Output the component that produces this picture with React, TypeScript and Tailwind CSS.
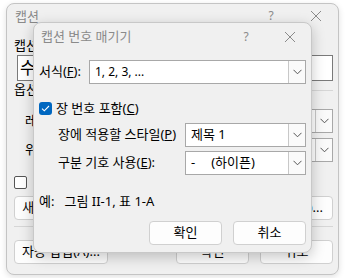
import React from 'react';

const font = { fontFamily: '"Noto Sans", "Noto Sans CJK KR", sans-serif' };

function Chevron() {
  return (
    <svg width="9" height="6" viewBox="0 0 9 6">
      <path d="M0.5 0.8 L4.5 4.8 L8.5 0.8" fill="none" stroke="#555" strokeWidth="1" />
    </svg>
  );
}

function Select({ value, className }: { value: React.ReactNode; className: string }) {
  return (
    <div className={`flex items-stretch border border-[#a8a8a8] bg-white ${className}`}>
      <div className="flex flex-1 items-center pl-[5px] text-[12px] text-black">{value}</div>
      <div className="flex w-[17px] items-center justify-center border-l border-[#c8c8c8] bg-[#fafafa]">
        <Chevron />
      </div>
    </div>
  );
}

function Btn({ children, className }: { children: React.ReactNode; className: string }) {
  return (
    <div className={`flex h-[24px] items-center rounded-[4px] border border-[#d0d0d0] bg-[#fdfdfd] text-[13px] text-black ${className}`}>
      {children}
    </div>
  );
}

function CloseX() {
  return (
    <svg width="12" height="12" viewBox="0 0 12 12">
      <path d="M1 1 L11 11 M11 1 L1 11" stroke="#8a8a8a" strokeWidth="1" />
    </svg>
  );
}

export default function App() {
  return (
    <div className="relative h-[278px] w-[347px] overflow-hidden bg-white" style={font}>
      {/* outer caption dialog */}
      <div className="ml-[6px] mt-[3px] flex h-[272px] w-[333px] flex-col rounded-[8px] border border-[#c4c4c4] bg-[#f0f0f0] shadow-[0_2px_6px_rgba(0,0,0,0.12)]">
        <div className="flex h-[23px] items-center pl-[8px] text-[13px] text-[#8a8a8a]">
          <span className="flex-1 pt-[2px]">캡션</span>
          <span className="w-[14px] text-center text-[12px]">?</span>
          <span className="ml-[32px] mr-[16px]"><CloseX /></span>
        </div>
        <div className="flex flex-col pl-[7px] pr-[5px]">
          <div className="mt-[10px] h-[16px] text-[13px] leading-[16px] text-black">캡션(C):</div>
          <div className="ml-[3px] mt-[2px] flex h-[26px] items-center border border-[#7a7a7a] bg-white pl-[2px] text-[17px] text-black">수식 1</div>
          <div className="mt-[1px] flex h-[16px] items-center text-[13px] text-black">
            <span>옵션</span>
            <div className="ml-[6px] h-px flex-1 bg-[#d6d6d6]" />
          </div>
          <div className="mt-[11px] flex h-[24px] items-center">
            <span className="ml-[11px] w-[70px] text-[13px] text-black">레이블(L):</span>
            <Select value="수식" className="h-[24px] flex-1" />
          </div>
          <div className="mt-[5px] flex h-[24px] items-center">
            <span className="ml-[11px] w-[70px] text-[13px] text-black">위치(P):</span>
            <Select value="선택한 항목 아래" className="h-[24px] flex-1" />
          </div>
          <div className="mt-[14px] flex h-[13px] items-center">
            <div className="h-[13px] w-[13px] rounded-[2px] border border-[#555] bg-white" />
            <span className="ml-[6px] text-[13px] text-black">캡션에서 레이블 제외(E)</span>
          </div>
          <div className="mt-[7px] flex h-[24px] gap-[8px]">
            <Btn className="w-[96px] justify-center">새 레이블(N)...</Btn>
            <Btn className="flex-1 justify-center">레이블 삭제(D)</Btn>
            <Btn className="w-[112px] justify-end border-[#0067c0] pr-[9px]">번호 매기기(U)...</Btn>
          </div>
          <div className="mt-[6px] h-px bg-[#d6d6d6]" />
          <div className="mt-[13px] flex h-[24px]">
            <Btn className="w-[94px] justify-center">자동 삽입(A)...</Btn>
            <div className="flex-1" />
            <Btn className="w-[73px] justify-center">확인</Btn>
            <Btn className="ml-[11px] w-[73px] justify-center">취소</Btn>
          </div>
        </div>
      </div>

      {/* numbering dialog on top */}
      <div className="absolute left-[33px] top-[22px] flex h-[231px] w-[279px] flex-col rounded-[8px] border border-[#c8c8c8] bg-[#f0f0f0] shadow-[0_4px_14px_rgba(0,0,0,0.22)]">
        <div className="flex h-[27px] items-center pl-[7px] text-[13px] text-[#8a8a8a]">
          <span className="flex-1">캡션 번호 매기기</span>
          <span className="w-[14px] text-center text-[12px]">?</span>
          <span className="ml-[31px] mr-[15px] flex"><CloseX /></span>
        </div>
        <div className="flex flex-col pl-[5px] pr-[5px]">
          <div className="mt-[10px] flex h-[24px] items-center">
            <span className="w-[50px] text-[13px] text-black">서식(<u>F</u>):</span>
            <Select value="1, 2, 3, ..." className="h-[24px] flex-1" />
          </div>
          <div className="mt-[18px] flex h-[13px] items-center">
            <div className="flex h-[13px] w-[13px] items-center justify-center rounded-[3px] bg-[#0067c0]">
              <svg width="9" height="7" viewBox="0 0 9 7">
                <path d="M1 3.6 L3.3 5.8 L8 1" fill="none" stroke="#fff" strokeWidth="1.1" />
              </svg>
            </div>
            <span className="ml-[4px] text-[13px] text-black">장 번호 포함(<u>C</u>)</span>
          </div>
          <div className="mt-[8px] flex h-[24px] items-center">
            <span className="ml-[19px] w-[127px] text-[13px] text-black">장에 적용할 스타일(<u>P</u>)</span>
            <Select value={<span className="text-[13px]">제목 1</span>} className="h-[24px] flex-1" />
          </div>
          <div className="mt-[4px] flex h-[24px] items-center">
            <span className="ml-[19px] w-[127px] text-[13px] text-black">구분 기호 사용(<u>E</u>):</span>
            <Select value={<span className="text-[13px]">-<span className="ml-[16px]">(하이픈)</span></span>} className="h-[24px] flex-1" />
          </div>
          <div className="mt-[19px] flex h-[16px] items-center text-[13px] text-black">
            <span>예:</span>
            <span className="ml-[10px]">그림 II-1, 표 1-A</span>
          </div>
          <div className="mt-[11px] flex h-[24px] justify-end gap-[11px]">
            <Btn className="w-[73px] justify-center">확인</Btn>
            <Btn className="w-[73px] justify-center">취소</Btn>
          </div>
        </div>
      </div>
    </div>
  );
}
